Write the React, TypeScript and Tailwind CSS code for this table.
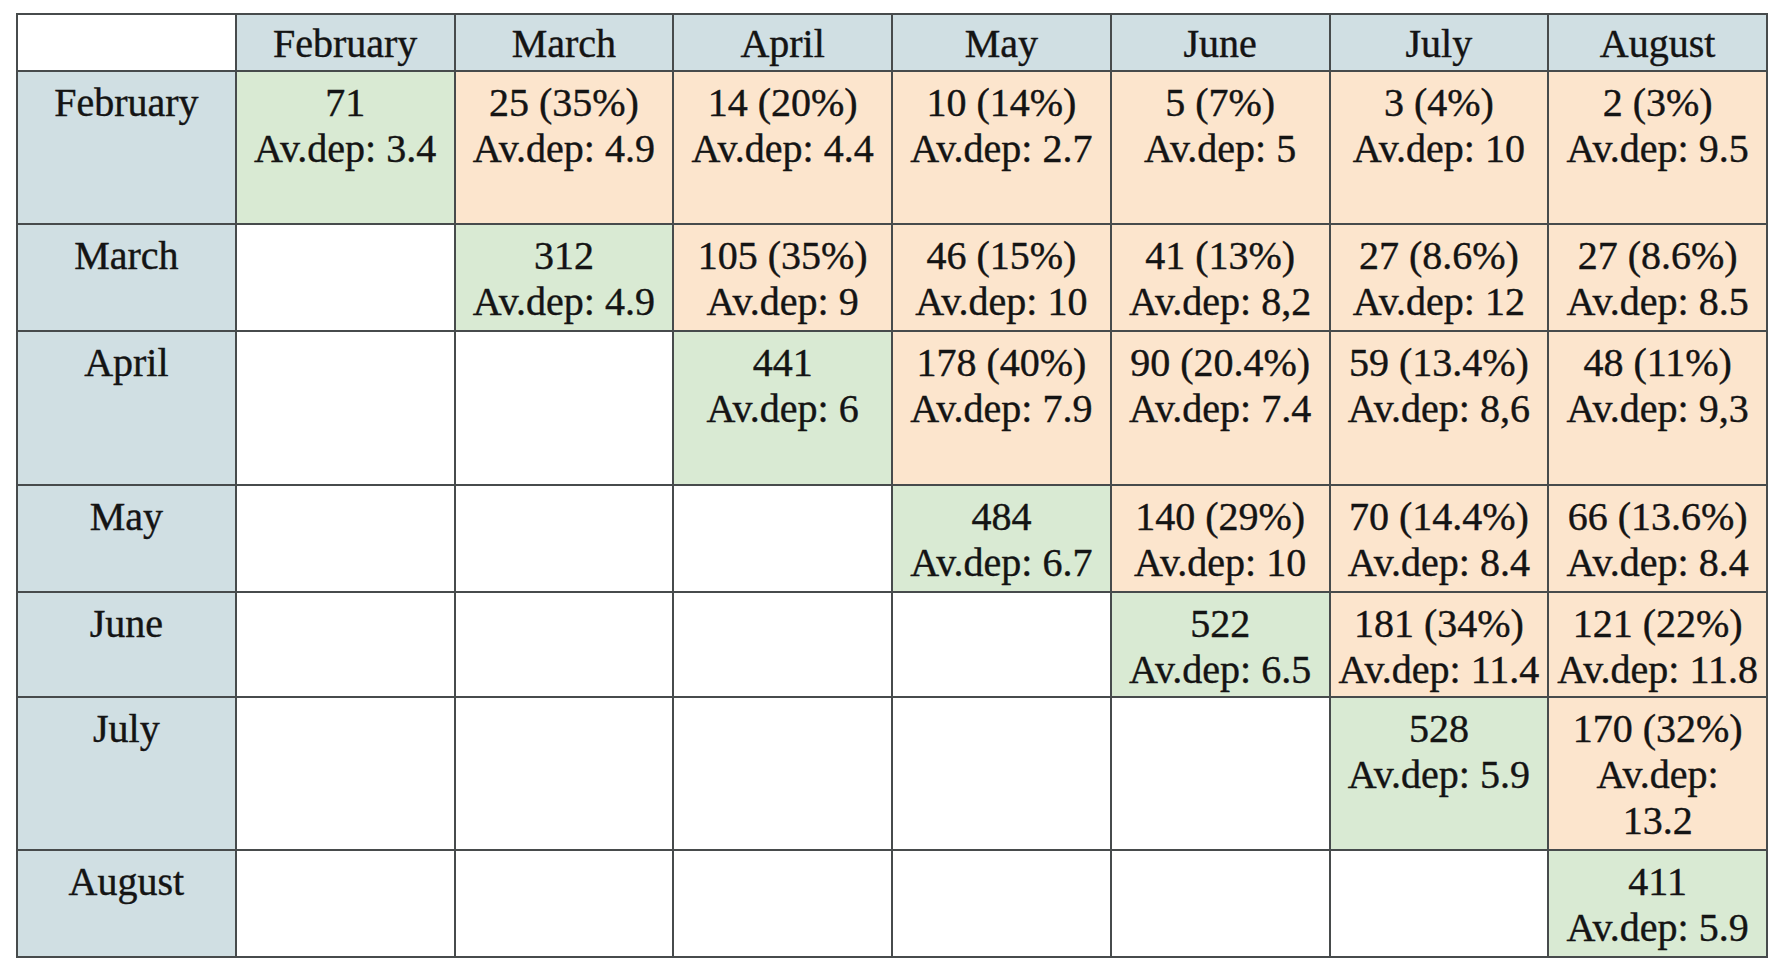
const months = ["February", "March", "April", "May", "June", "July", "August"];

type Cell = { lines: string[]; kind: "diag" | "off" | "empty" };

const raw: (string[] | null)[][] = [
  [["71", "Av.dep: 3.4"], ["25 (35%)", "Av.dep: 4.9"], ["14 (20%)", "Av.dep: 4.4"], ["10 (14%)", "Av.dep: 2.7"], ["5 (7%)", "Av.dep: 5"], ["3 (4%)", "Av.dep: 10"], ["2 (3%)", "Av.dep: 9.5"]],
  [null, ["312", "Av.dep: 4.9"], ["105 (35%)", "Av.dep: 9"], ["46 (15%)", "Av.dep: 10"], ["41 (13%)", "Av.dep: 8,2"], ["27 (8.6%)", "Av.dep: 12"], ["27 (8.6%)", "Av.dep: 8.5"]],
  [null, null, ["441", "Av.dep: 6"], ["178 (40%)", "Av.dep: 7.9"], ["90 (20.4%)", "Av.dep: 7.4"], ["59 (13.4%)", "Av.dep: 8,6"], ["48 (11%)", "Av.dep: 9,3"]],
  [null, null, null, ["484", "Av.dep: 6.7"], ["140 (29%)", "Av.dep: 10"], ["70 (14.4%)", "Av.dep: 8.4"], ["66 (13.6%)", "Av.dep: 8.4"]],
  [null, null, null, null, ["522", "Av.dep: 6.5"], ["181 (34%)", "Av.dep: 11.4"], ["121 (22%)", "Av.dep: 11.8"]],
  [null, null, null, null, null, ["528", "Av.dep: 5.9"], ["170 (32%)", "Av.dep:", "13.2"]],
  [null, null, null, null, null, null, ["411", "Av.dep: 5.9"]],
];

const rowHeights = ["h-[153px]", "h-[107px]", "h-[154px]", "h-[107px]", "h-[105px]", "h-[153px]", "h-[107px]"];

function toCell(v: string[] | null, r: number, c: number): Cell {
  if (!v) return { lines: [], kind: "empty" };
  return { lines: v, kind: r === c ? "diag" : "off" };
}

const bgFor = {
  diag: "bg-[#d9ead3]",
  off: "bg-[#fce5cd]",
  empty: "bg-white",
};

export default function App() {
  return (
    <div className="min-h-screen bg-white pl-[16px] pt-[13px] font-[family-name:Liberation_Serif,Times_New_Roman,serif] text-[40px] leading-[46px] text-[#141414] [-webkit-text-stroke:0.4px_#141414]">
      <table className="table-fixed border-collapse w-[1752px]">
        <tbody>
          <tr className="h-[57px]">
            <td className="border-2 border-[#474b4c] bg-white" />
            {months.map((m) => (
              <td key={m} className="border-2 border-[#474b4c] bg-[#d0dfe3] text-center align-top pt-[6px] whitespace-nowrap">
                {m}
              </td>
            ))}
          </tr>
          {raw.map((row, r) => (
            <tr key={r} className={rowHeights[r]}>
              <td className="border-2 border-[#474b4c] bg-[#d0dfe3] text-center align-top pt-[8px] whitespace-nowrap">
                {months[r]}
              </td>
              {row.map((v, c) => {
                const cell = toCell(v, r, c);
                return (
                  <td
                    key={c}
                    className={`border-2 border-[#474b4c] ${bgFor[cell.kind]} text-center align-top pt-[8px] px-0`}
                  >
                    {cell.lines.map((l, i) => (
                      <div key={i} className="whitespace-nowrap">
                        {l}
                      </div>
                    ))}
                  </td>
                );
              })}
            </tr>
          ))}
        </tbody>
      </table>
    </div>
  );
}
